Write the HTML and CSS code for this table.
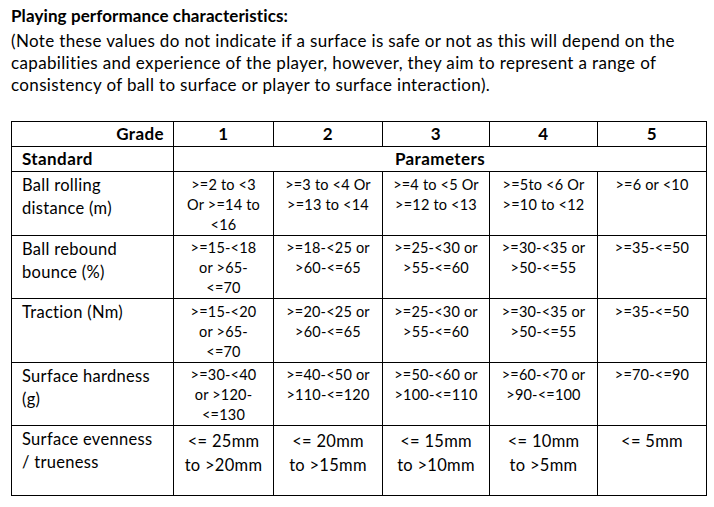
FILE: index.html
```html
<!DOCTYPE html>
<html>
<head>
<meta charset="utf-8">
<link rel="stylesheet" href="styles.css">
</head>
<body>
<div class="page">
  <p class="title">Playing performance characteristics:</p>
  <p class="note">(Note these values do not indicate if a surface is safe or not as this will depend on the capabilities and experience of the player, however, they aim to represent a range of consistency of ball to surface or player to surface interaction).</p>
  <table class="grid">
    <colgroup>
      <col class="c0"><col class="c1"><col class="c2"><col class="c3"><col class="c4"><col class="c5">
    </colgroup>
    <tr class="r-head">
      <th class="grade">Grade</th><th>1</th><th>2</th><th>3</th><th>4</th><th>5</th>
    </tr>
    <tr class="r-head">
      <th class="std">Standard</th><th colspan="5">Parameters</th>
    </tr>
    <tr class="r-data">
      <td class="label">Ball rolling distance (m)</td>
      <td>&gt;=2 to &lt;3<br>Or &gt;=14 to<br>&lt;16</td>
      <td>&gt;=3 to &lt;4 Or<br>&gt;=13 to &lt;14</td>
      <td>&gt;=4 to &lt;5 Or<br>&gt;=12 to &lt;13</td>
      <td>&gt;=5to &lt;6 Or<br>&gt;=10 to &lt;12</td>
      <td>&gt;=6 or &lt;10</td>
    </tr>
    <tr class="r-data">
      <td class="label">Ball rebound bounce (%)</td>
      <td>&gt;=15-&lt;18<br>or &gt;65-<br>&lt;=70</td>
      <td>&gt;=18-&lt;25 or<br>&gt;60-&lt;=65</td>
      <td>&gt;=25-&lt;30 or<br>&gt;55-&lt;=60</td>
      <td>&gt;=30-&lt;35 or<br>&gt;50-&lt;=55</td>
      <td>&gt;=35-&lt;=50</td>
    </tr>
    <tr class="r-data">
      <td class="label">Traction (Nm)</td>
      <td>&gt;=15-&lt;20<br>or &gt;65-<br>&lt;=70</td>
      <td>&gt;=20-&lt;25 or<br>&gt;60-&lt;=65</td>
      <td>&gt;=25-&lt;30 or<br>&gt;55-&lt;=60</td>
      <td>&gt;=30-&lt;35 or<br>&gt;50-&lt;=55</td>
      <td>&gt;=35-&lt;=50</td>
    </tr>
    <tr class="r-data">
      <td class="label">Surface hardness (g)</td>
      <td>&gt;=30-&lt;40<br>or &gt;120-<br>&lt;=130</td>
      <td>&gt;=40-&lt;50 or<br>&gt;110-&lt;=120</td>
      <td>&gt;=50-&lt;60 or<br>&gt;100-&lt;=110</td>
      <td>&gt;=60-&lt;70 or<br>&gt;90-&lt;=100</td>
      <td>&gt;=70-&lt;=90</td>
    </tr>
    <tr class="r-last">
      <td class="label">Surface evenness / trueness</td>
      <td>&lt;= 25mm<br>to &gt;20mm</td>
      <td>&lt;= 20mm<br>to &gt;15mm</td>
      <td>&lt;= 15mm<br>to &gt;10mm</td>
      <td>&lt;= 10mm<br>to &gt;5mm</td>
      <td>&lt;= 5mm</td>
    </tr>
  </table>
</div>
</body>
</html>
```

FILE: styles.css
```css
html, body {
  margin: 0;
  padding: 0;
  background: #ffffff;
}
.page {
  padding: 5px 0 0 11px;
  font-family: Lato, "Open Sans", sans-serif;
  color: #000;
}
.title {
  margin: 0 0 3px 0;
  font-size: 17px;
  letter-spacing: 0.1px;
  font-weight: bold;
  line-height: 22px;
}
.note {
  margin: 0;
  font-size: 17px;
  letter-spacing: 0.35px;
  line-height: 22px;
  width: 685px;
}
.grid {
  margin-top: 25px;
  border-collapse: collapse;
  table-layout: fixed;
  width: 696px;
  font-size: 14.5px;
  letter-spacing: 0.2px;
}
.c0 { width: 162px; }
.c1 { width: 100px; }
.c2 { width: 109px; }
.c3 { width: 107px; }
.c4 { width: 108px; }
.c5 { width: 109px; }
.grid th, .grid td {
  border: 1px solid #000;
  padding: 0 3px;
  vertical-align: top;
  text-align: center;
}
.grid th {
  font-weight: bold;
  font-size: 17px;
  letter-spacing: 0.4px;
  line-height: 22px;
  height: 23px;
  padding-top: 1px;
  padding-bottom: 0;
}
.grid th.grade {
  text-align: right;
  padding-right: 9px;
}
.grid th.std {
  text-align: left;
  padding-left: 10px;
}
.r-data td {
  padding-top: 2.5px;
  padding-bottom: 0;
  line-height: 20px;
}
.grid td.label {
  text-align: left;
  padding-left: 10px;
  padding-right: 12px;
  font-size: 16.5px;
  letter-spacing: 0.3px;
  line-height: 23px;
  padding-top: 2px;
}
.r-last td {
  height: 66px;
  padding-top: 3px;
  padding-bottom: 0;
  font-size: 16.5px;
  letter-spacing: 0.3px;
  line-height: 24px;
}
```
